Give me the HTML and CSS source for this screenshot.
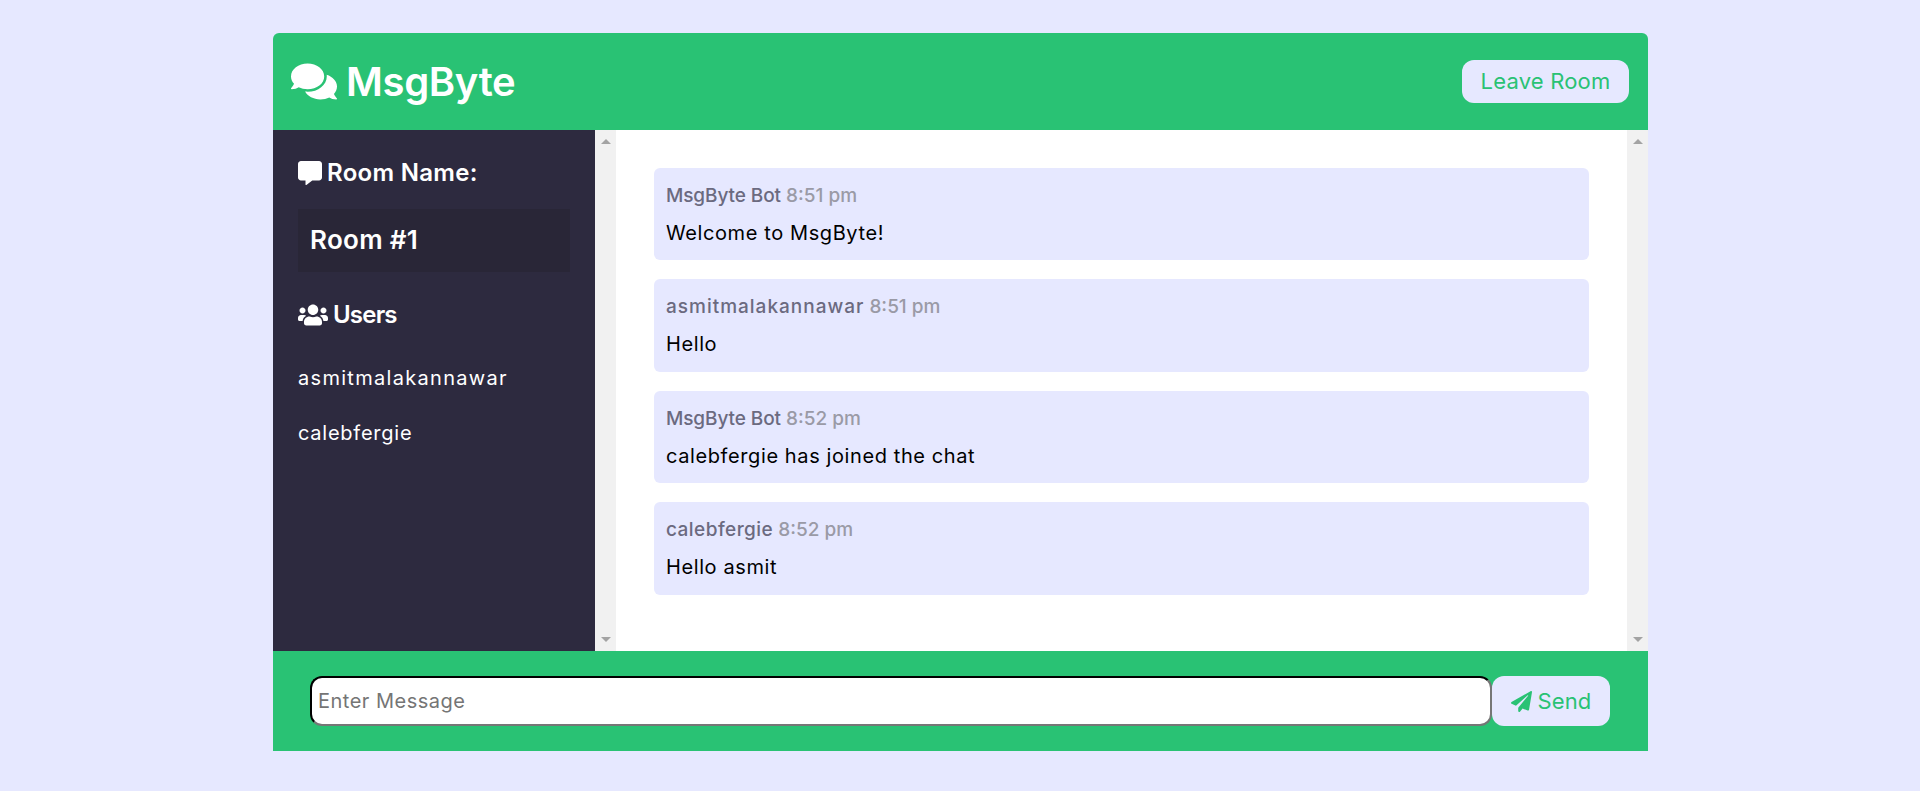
FILE: index.html
```html
<!DOCTYPE html>
<html lang="en">
<head>
<meta charset="utf-8">
<title>MsgByte</title>
<link rel="stylesheet" href="styles.css">
</head>
<body>
<div class="chat">
  <header class="top">
    <h1 class="logo">
      <svg class="logo-icon" viewBox="0 0 576 512"><path d="M416 192c0-88.4-93.1-160-208-160S0 103.6 0 192c0 34.3 14.1 65.9 38 92-13.4 30.2-35.5 54.2-35.8 54.5-2.2 2.3-2.8 5.7-1.5 8.7S4.8 352 8 352c36.6 0 66.9-12.3 88.7-25 32.2 15.7 70.3 25 111.3 25 114.9 0 208-71.6 208-160zm122 220c23.9-26 38-57.7 38-92 0-66.9-53.5-124.2-129.3-148.1.9 6.6 1.3 13.3 1.3 20.1 0 105.9-107.7 192-240 192-10.8 0-21.3-.8-31.7-1.9C207.8 439.6 281.8 480 368 480c41 0 79.1-9.2 111.3-25 21.8 12.7 52.1 25 88.7 25 3.2 0 6.1-1.9 7.3-4.8 1.3-2.9.7-6.3-1.5-8.7-.3-.3-22.4-24.2-35.8-54.5z"/></svg>
      <span>MsgByte</span>
    </h1>
    <a class="btn leave">Leave Room</a>
  </header>
  <main class="middle">
    <aside class="side">
      <h3 class="side-title room-title">
        <svg class="icon-comment" viewBox="0 0 512 512"><path d="M448 0H64C28.7 0 0 28.7 0 64v288c0 35.3 28.7 64 64 64h96v84c0 9.8 11.2 15.5 19.1 9.7L304 416h144c35.3 0 64-28.7 64-64V64c0-35.3-28.7-64-64-64z"/></svg>
        <span>Room Name:</span>
      </h3>
      <h2 class="room">Room #1</h2>
      <h3 class="side-title users-title">
        <svg class="icon-users" viewBox="0 0 640 512"><path d="M96 224c35.3 0 64-28.7 64-64s-28.7-64-64-64-64 28.7-64 64 28.7 64 64 64zm448 0c35.3 0 64-28.7 64-64s-28.7-64-64-64-64 28.7-64 64 28.7 64 64 64zm32 32h-64c-17.6 0-33.5 7.1-45.1 18.6 40.3 22.1 68.9 62 75.1 109.4h66c17.7 0 32-14.3 32-32v-32c0-35.3-28.7-64-64-64zm-256 0c61.9 0 112-50.1 112-112S381.9 32 320 32 208 82.1 208 144s50.1 112 112 112zm76.8 32h-8.3c-20.8 10-43.9 16-68.5 16s-47.6-6-68.5-16h-8.3C179.6 288 128 339.6 128 403.2V432c0 26.5 21.5 48 48 48h288c26.5 0 48-21.5 48-48v-28.8c0-63.6-51.6-115.2-115.2-115.2zm-223.7-13.4C161.5 263.1 145.6 256 128 256H64c-35.3 0-64 28.7-64 64v32c0 17.7 14.3 32 32 32h65.9c6.3-47.4 34.9-87.3 75.2-109.4z"/></svg>
        <span>Users</span>
      </h3>
      <ul class="users">
        <li class="user-long">asmitmalakannawar</li>
        <li>calebfergie</li>
      </ul>
    </aside>
    <div class="scrollbar"><i class="arrow up"></i><i class="arrow down"></i></div>
    <section class="messages">
      <article class="msg">
        <p class="meta"><span class="name-bot">MsgByte Bot</span> <span class="time">8:51 pm</span></p>
        <p class="text">Welcome to MsgByte!</p>
      </article>
      <article class="msg">
        <p class="meta"><span class="name-long">asmitmalakannawar</span> <span class="time">8:51 pm</span></p>
        <p class="text">Hello</p>
      </article>
      <article class="msg">
        <p class="meta"><span class="name-bot">MsgByte Bot</span> <span class="time">8:52 pm</span></p>
        <p class="text">calebfergie has joined the chat</p>
      </article>
      <article class="msg">
        <p class="meta"><span class="name-short">calebfergie</span> <span class="time">8:52 pm</span></p>
        <p class="text">Hello asmit</p>
      </article>
    </section>
    <div class="scrollbar"><i class="arrow up"></i><i class="arrow down"></i></div>
  </main>
  <footer class="bottom">
    <form class="send-form">
      <input class="field" type="text" placeholder="Enter Message">
      <button class="btn send" type="button">
        <svg class="icon-plane" viewBox="0 0 512 512"><path d="M476 3.2L12.5 270.6c-18.1 10.4-15.8 35.6 2.2 43.2L121 358.4l287.3-253.2c5.5-4.9 13.3 2.6 8.6 8.3L176 407v80.5c0 23.6 28.5 32.9 42.5 15.8L282 426l124.6 52.2c14.2 6 30.4-2.9 33-18.2l72-432C515 7.8 493.3-6.8 476 3.2z"/></svg>
        <span>Send</span>
      </button>
    </form>
  </footer>
</div>
</body>
</html>
```
FILE: styles.css
```css
* { box-sizing: border-box; }
html, body { margin: 0; height: 100%; }
body {
  background: #e6e8ff;
  padding: 33px 272px 40px 273px;
  font-family: Inter, "Liberation Sans", sans-serif;
  font-size: 20px;
  overflow: hidden;
}
.chat { display: flex; flex-direction: column; height: 718px; }

.top {
  height: 97px;
  flex: none;
  display: flex;
  align-items: center;
  justify-content: space-between;
  background: #29c274;
  border-radius: 6px 6px 0 0;
  padding: 0 19px 0 18px;
}
.logo {
  margin: 0;
  display: flex;
  align-items: center;
  gap: 9px;
  color: #fff;
  font-size: 40px;
  font-weight: 600;
  letter-spacing: -.35px;
  line-height: 50px;
}
.logo-icon { width: 46px; height: 41px; fill: #fff; }
.btn {
  display: flex;
  align-items: center;
  justify-content: center;
  background: #e6e8ff;
  color: #29c274;
  border: 0;
  border-radius: 12px;
  font-family: inherit;
  font-size: 22px;
  font-weight: 400;
}
.leave { width: 167px; height: 43px; padding-bottom: 1px; letter-spacing: .2px; }

.middle { flex: 1; display: flex; min-height: 0; background: #fff; }
.side {
  width: 322px;
  flex: none;
  background: #2d2a3f;
  color: #fff;
  padding: 28px 25px 0;
}
.side-title {
  margin: 0;
  display: flex;
  align-items: center;
  gap: 5px;
  font-size: 24px;
  font-weight: 600;
  line-height: 30px;
}
.room-title { letter-spacing: .3px; }
.icon-comment { width: 24px; height: 24px; fill: #fff; }
.icon-users { width: 30px; height: 24px; fill: #fff; }
.room {
  margin: 21px 0 0;
  height: 63px;
  padding: 0 12px;
  background: #292637;
  font-size: 26px;
  font-weight: 600;
  letter-spacing: .3px;
  line-height: 61px;
}
.users-title { margin-top: 28px; letter-spacing: -.8px; }
.users {
  list-style: none;
  margin: 33px 0 0;
  padding: 0;
  font-size: 20px;
  line-height: 30px;
  letter-spacing: .75px;
}
.users .user-long { letter-spacing: 1.3px; }
.users li + li { margin-top: 25px; }

.scrollbar {
  width: 21px;
  flex: none;
  background: #f1f1f1;
  display: flex;
  flex-direction: column;
  justify-content: space-between;
  align-items: center;
  padding: 9px 0;
}
.arrow { width: 0; height: 0; border-left: 5px solid transparent; border-right: 5px solid transparent; }
.arrow.up { border-bottom: 5px solid #a3a3a3; }
.arrow.down { border-top: 5px solid #a3a3a3; }

.messages {
  flex: 1;
  min-width: 0;
  padding: 38px;
  display: flex;
  flex-direction: column;
  gap: 19px;
}
.msg {
  height: 92.4px;
  background: #e6e8ff;
  border-radius: 6px;
  padding: 13px 12px;
}
.msg p { margin: 0; line-height: 30px; }
.meta { color: #6b6a80; font-size: 19px; font-weight: 500; }
.name-bot { letter-spacing: -.1px; }
.name-long { letter-spacing: 1px; }
.name-short { letter-spacing: .45px; }
.time { color: #9a9aa6; }
.msg .text { margin-top: 7px; color: #000; font-size: 20px; letter-spacing: .6px; }

.bottom {
  height: 100px;
  flex: none;
  background: #29c274;
  padding: 25px 38px 25px 37px;
}
.send-form { display: flex; height: 50px; }
.field {
  flex: 1;
  min-width: 0;
  height: 50px;
  border: 2px inset #767676;
  border-color: #1f1f1f #767676 #767676 #1f1f1f;
  border-radius: 12px;
  padding: 0 6px;
  background: #fff;
  font-family: inherit;
  font-size: 20px;
  letter-spacing: .5px;
}
.field::placeholder { color: #757575; opacity: 1; }
.send { width: 118px; height: 50px; gap: 6px; letter-spacing: .1px; }
.icon-plane { width: 21px; height: 21px; fill: #29c274; }
```
